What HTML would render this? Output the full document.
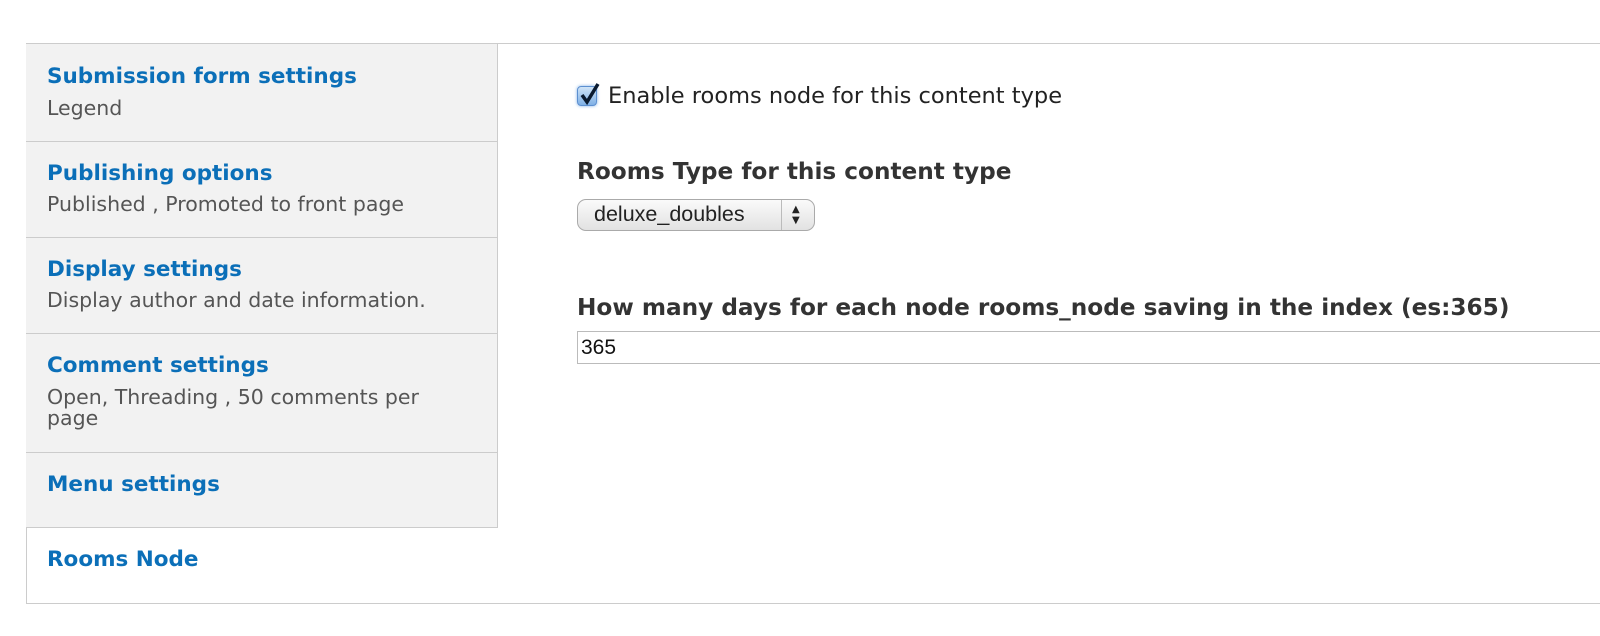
<!DOCTYPE html>
<html><head><style>
body{margin:0;background:#fff;width:1600px;height:636px;overflow:hidden;font-family:"DejaVu Sans","Liberation Sans",sans-serif;}
.box{position:absolute;left:26px;top:43px;width:1600px;height:561px;border:1px solid #ccc;box-sizing:border-box;}
.nav{position:absolute;left:26px;top:44px;width:472px;}
.it{background:#f2f2f2;border-right:1px solid #ccc;border-bottom:1px solid #ccc;box-sizing:border-box;position:relative;}
.t{color:#0b6fb8;font-weight:bold;font-size:21.5px;position:absolute;left:21px;white-space:nowrap;}
.s{color:#555;font-size:20.5px;position:absolute;left:21px;line-height:22px;}
.r{position:absolute;white-space:nowrap;}
</style></head><body>
<div class="box"></div>
<div class="nav">
<div class="it" style="height:98px"><div class="t" style="top:20px">Submission form settings</div><div class="s" style="top:53px">Legend</div></div>
<div class="it" style="height:96px"><div class="t" style="top:19px">Publishing options</div><div class="s" style="top:51px;white-space:nowrap">Published , Promoted to front page</div></div>
<div class="it" style="height:96px"><div class="t" style="top:19px">Display settings</div><div class="s" style="top:51px;white-space:nowrap">Display author and date information.</div></div>
<div class="it" style="height:119px"><div class="t" style="top:19px">Comment settings</div><div class="s" style="top:53px;width:395px;line-height:21px">Open, Threading , 50 comments per page</div></div>
<div class="it" style="height:75px"><div class="t" style="top:19px">Menu settings</div></div>
<div style="position:relative;height:60px"><div class="t" style="top:19px">Rooms Node</div></div>
</div>
<div class="r" style="left:577px;top:86px;width:20px;height:20px;border-radius:4px;background:linear-gradient(#cfe3f7,#7fb0e6);border:1px solid #5c8fd0;box-sizing:border-box;box-shadow:0 0 3px #7fb0e6"></div>
<svg class="r" style="left:578px;top:81px" width="26" height="26" viewBox="0 0 26 26"><path d="M4 14 L9 21 L20 3" fill="none" stroke="#0a1a30" stroke-width="3.5"/></svg>
<div class="r" style="left:608px;top:83px;font-size:22.5px;color:#222">Enable rooms node for this content type</div>
<div class="r" style="left:577px;top:158px;font-size:23.2px;font-weight:bold;color:#333">Rooms Type for this content type</div>
<div class="r" style="left:577px;top:199px;width:238px;height:32px;border:1px solid #aaa;border-radius:9px;box-sizing:border-box;background:linear-gradient(#fafafa,#e2e2e2);"></div>
<div class="r" style="left:781px;top:200px;width:1px;height:30px;background:#bbb"></div>
<div class="r" style="left:594px;top:202px;font-family:'Liberation Sans',sans-serif;font-size:21.5px;color:#222">deluxe_doubles</div>
<div class="r" style="left:792px;top:204px;font-size:10px;line-height:11px;color:#222">▲<br>▼</div>
<div class="r" style="left:577px;top:294px;font-size:23.2px;font-weight:bold;color:#333">How many days for each node rooms_node saving in the index (es:365)</div>
<div class="r" style="left:577px;top:331px;width:1100px;height:33px;border:1px solid #bbb;box-sizing:border-box;"></div>
<div class="r" style="left:581px;top:336px;font-family:'Liberation Sans',sans-serif;font-size:21px;color:#111">365</div>
</body></html>
